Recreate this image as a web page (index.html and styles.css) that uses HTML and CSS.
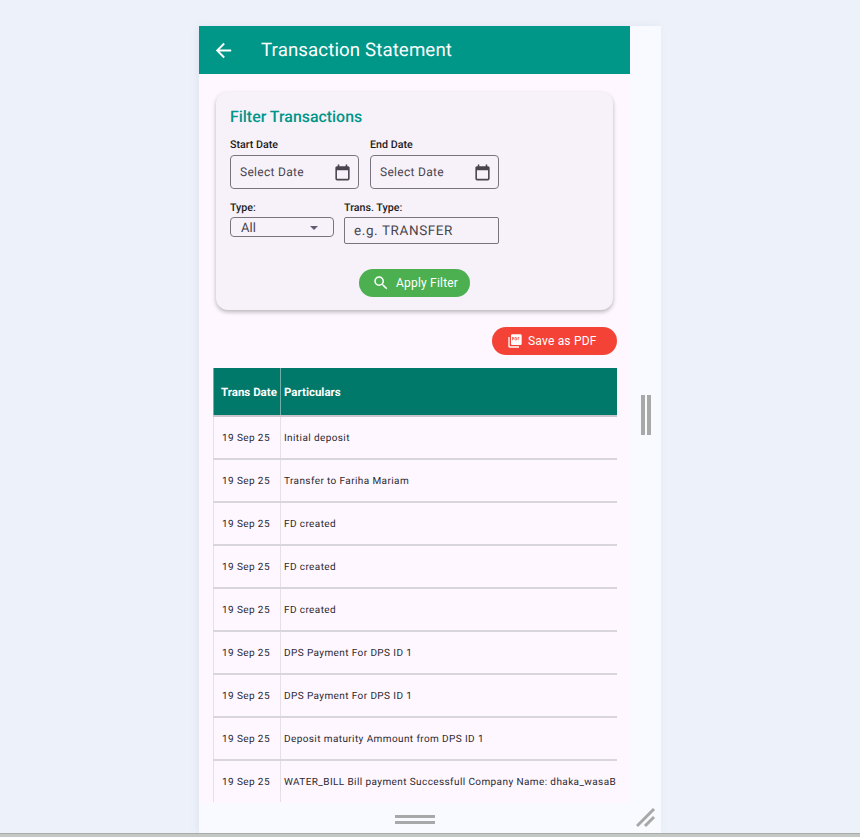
FILE: index.html
```html
<!DOCTYPE html>
<html lang="en">
<head>
    <meta charset="UTF-8">
    <meta name="viewport" content="width=device-width, initial-scale=1.0">
    <title>Transaction Statement</title>
    <link rel="stylesheet" href="styles.css">
</head>
<body>

    <div class="frame">
        <div class="app">
            <header class="app-bar">
                <svg class="back-icon" viewBox="0 0 24 24" width="23" height="23"><path d="M20 11H7.830l5.590-5.590L12 4l-8 8 8 8 1.410-1.410L7.830 13H20v-2z"/></svg>
                <h1>Transaction Statement</h1>
            </header>

            <div class="content">
                <!-- Filter card -->
                <section class="filter-card">
                    <h2>Filter Transactions</h2>
                    <div class="date-row">
                        <div class="field">
                            <label>Start Date</label>
                            <div class="date-input">
                                <span>Select Date</span>
                                <svg viewBox="0 0 24 24" width="19" height="19"><path d="M19 4h-1V2h-2v2H8V2H6v2H5c-1.100 0-2 .9-2 2v14c0 1.100.9 2 2 2h14c1.100 0 2-.9 2-2V6c0-1.100-.9-2-2-2zm0 16H5V9h14v11z"/></svg>
                            </div>
                        </div>
                        <div class="field">
                            <label>End Date</label>
                            <div class="date-input">
                                <span>Select Date</span>
                                <svg viewBox="0 0 24 24" width="19" height="19"><path d="M19 4h-1V2h-2v2H8V2H6v2H5c-1.100 0-2 .9-2 2v14c0 1.100.9 2 2 2h14c1.100 0 2-.9 2-2V6c0-1.100-.9-2-2-2zm0 16H5V9h14v11z"/></svg>
                            </div>
                        </div>
                    </div>
                    <div class="type-row">
                        <div class="field">
                            <label>Type:</label>
                            <div class="select-box">
                                <span>All</span>
                                <i class="caret"></i>
                            </div>
                        </div>
                        <div class="field">
                            <label>Trans. Type:</label>
                            <div class="text-box">e.g. TRANSFER</div>
                        </div>
                    </div>
                    <div class="apply-row">
                        <button class="apply-btn">
                            <svg viewBox="0 0 24 24" width="18" height="18"><path d="M15.500 14h-.79l-.28-.27A6.470 6.470 0 0 0 16 9.500 6.500 6.500 0 1 0 9.500 16c1.610 0 3.090-.59 4.230-1.570l.27.28v.79l5 4.990L20.490 19l-4.990-5zm-6 0C7.010 14 5 11.990 5 9.500S7.010 5 9.500 5 14 7.010 14 9.500 11.990 14 9.500 14z"/></svg>
                            Apply Filter
                        </button>
                    </div>
                </section>

                <div class="pdf-row">
                    <button class="pdf-btn">
                        <svg viewBox="0 0 24 24" width="16" height="16"><path d="M20 2H8c-1.100 0-2 .9-2 2v12c0 1.100.9 2 2 2h12c1.100 0 2-.9 2-2V4c0-1.100-.9-2-2-2zM9.500 9.500h-1V11H7.500V6.500h2c.55 0 1 .45 1 1v1c0 .55-.45 1-1 1zm5 .5c0 .55-.45 1-1 1h-2V6.500h2c.55 0 1 .45 1 1V10zm4-2.500h-1.500v1h1.500v1h-1.500V11H16V6.500h2.500v1zM8.500 7.500h1v1h-1v-1zm4 0h1V10h-1V7.500zM4 6H2v14c0 1.100.9 2 2 2h14v-2H4V6z"/></svg>
                        Save as PDF
                    </button>
                </div>

                <!-- Statement table -->
                <div class="table-wrap">
                    <table>
                        <thead>
                            <tr>
                                <th class="date-col">Trans Date</th>
                                <th>Particulars</th>
                            </tr>
                        </thead>
                        <tbody>
                            <tr><td class="date-col">19 Sep 25</td><td>Initial deposit</td></tr>
                            <tr><td class="date-col">19 Sep 25</td><td>Transfer to Fariha Mariam</td></tr>
                            <tr><td class="date-col">19 Sep 25</td><td>FD created</td></tr>
                            <tr><td class="date-col">19 Sep 25</td><td>FD created</td></tr>
                            <tr><td class="date-col">19 Sep 25</td><td>FD created</td></tr>
                            <tr><td class="date-col">19 Sep 25</td><td>DPS Payment For DPS ID 1</td></tr>
                            <tr><td class="date-col">19 Sep 25</td><td>DPS Payment For DPS ID 1</td></tr>
                            <tr><td class="date-col">19 Sep 25</td><td>Deposit maturity Ammount from DPS ID 1</td></tr>
                            <tr><td class="date-col">19 Sep 25</td><td>WATER_BILL Bill payment Successfull Company Name: dhaka_wasaB</td></tr>
                        </tbody>
                    </table>
                </div>
            </div>
        </div>

        <div class="side-handle"><i></i><i></i></div>

        <div class="bottom-handle"><i></i><i></i></div>
        <div class="corner">
            <svg viewBox="0 0 20 20" width="20" height="20"><path d="M1 18 L18 1 M9 18 L18 9" /></svg>
        </div>
    </div>

    <div class="page-edge"></div>

</body>
</html>
```

FILE: styles.css
```css
body {
    font-family: Roboto, "Liberation Sans", sans-serif;
    text-rendering: geometricPrecision;
    margin: 0;
    height: 837px;
    overflow: hidden;
    background-color: #edf2fa;
    display: flex;
    flex-direction: column;
    align-items: center;
    color: #1d1b20;
}

.frame {
    margin-top: 26px;
    width: 462px;
    height: 807px;
    display: grid;
    grid-template-columns: 431px 31px;
    grid-template-rows: 777px 30px;
    background-color: #f9faff;
    box-shadow: -2px 0 8px rgba(60, 80, 110, 0.08);
}

.app {
    background-color: #fef7ff;
    overflow: hidden;
}

.app-bar {
    height: 48px;
    background-color: #009688;
    color: #ffffff;
    display: flex;
    align-items: center;
    padding-left: 13px;
}

.back-icon {
    fill: #ffffff;
    margin-right: 26px;
}

.app-bar h1 {
    font-size: 18.7px;
    line-height: 48px;
    font-weight: 400;
    margin: 0;
    letter-spacing: 0.1px;
}

.content {
    padding: 18px 14px 0 14px;
}

.filter-card {
    margin: 0 3px;
    height: 218px;
    box-sizing: border-box;
    padding: 15px 14px 14px;
    background-color: #f7f2fa;
    border-radius: 12px;
    box-shadow: 0 2px 4px rgba(0, 0, 0, 0.28);
}

.filter-card h2 {
    margin: 0 0 12px 0;
    font-size: 15.9px;
    line-height: 20px;
    font-weight: 500;
    color: #009688;
}

.field label {
    display: block;
    font-size: 10.7px;
    line-height: 12px;
    font-weight: 500;
    margin-bottom: 4px;
}

.date-row {
    display: flex;
    gap: 11px;
}

.date-input {
    width: 129px;
    height: 34px;
    box-sizing: border-box;
    border: 1px solid #79747e;
    border-radius: 4px;
    display: flex;
    align-items: center;
    justify-content: space-between;
    padding: 0 6px 0 9px;
    font-size: 12px;
    letter-spacing: 0.3px;
    color: #49454f;
}

.date-input svg {
    fill: #49454f;
}

.type-row {
    display: flex;
    gap: 10px;
    margin-top: 13px;
}

.type-row label {
    margin-bottom: 3px;
}

.select-box {
    width: 104px;
    height: 20px;
    box-sizing: border-box;
    border: 1px solid #79747e;
    border-radius: 4px;
    display: flex;
    align-items: center;
    justify-content: space-between;
    padding: 2px 15px 0 10px;
    font-size: 13px;
    color: #49454f;
}

.caret {
    width: 0;
    height: 0;
    border-left: 4.5px solid transparent;
    border-right: 4.5px solid transparent;
    border-top: 4.5px solid #625b71;
}

.text-box {
    width: 155px;
    height: 27px;
    box-sizing: border-box;
    border: 1px solid #79747e;
    border-radius: 2px;
    padding: 0 9px;
    line-height: 27px;
    font-size: 13.5px;
    letter-spacing: 0.6px;
    color: #49454f;
}

.apply-row {
    display: flex;
    justify-content: center;
    margin-top: 25px;
}

button {
    border: none;
    color: #ffffff;
    font-family: inherit;
    font-size: 12px;
    letter-spacing: 0.2px;
    font-weight: 400;
    display: flex;
    align-items: center;
    height: 28px;
    border-radius: 14px;
    padding: 0;
}

button svg {
    fill: #ffffff;
}

.apply-btn {
    width: 111px;
    background-color: #4caf50;
    padding-left: 13px;
    gap: 6px;
}

.pdf-row {
    display: flex;
    justify-content: flex-end;
    margin-top: 17px;
    margin-right: -1px;
}

.pdf-btn {
    width: 125px;
    background-color: #f44336;
    padding-left: 15px;
    gap: 5px;
}

.table-wrap {
    margin-top: 13px;
    width: 404px;
    overflow: hidden;
}

table {
    border-collapse: collapse;
    table-layout: fixed;
    width: 404px;
    font-size: 10px;
    letter-spacing: 0.4px;
    color: #2b2930;
}

th, td {
    padding: 0 3px;
    text-align: left;
    white-space: nowrap;
    border-left: 1px solid #e4e0e6;
}

th {
    height: 47px;
    background-color: #00796b;
    color: #ffffff;
    font-size: 11.5px;
    font-weight: 700;
    letter-spacing: 0;
    border-left: 1px solid #70b0a8;
    border-bottom: 2px solid #cac6cc;
}

td {
    height: 40px;
    padding-top: 1px;
    border-bottom: 2px solid #d9d5dc;
}

/* last row runs into the bottom of the app, no line under it */
tbody tr:last-child td {
    border-bottom: none;
}

.date-col {
    width: 67px;
    box-sizing: border-box;
    padding-left: 8px;
    padding-right: 0;
}

th.date-col {
    padding-left: 7px;
}

.side-handle {
    display: flex;
    justify-content: center;
    align-items: center;
    gap: 2px;
}

.side-handle i {
    width: 4px;
    height: 40px;
    background-color: #a8a8a8;
}

.bottom-handle {
    display: flex;
    flex-direction: column;
    align-items: center;
    justify-content: center;
    gap: 3px;
    padding-top: 3px;
}

.bottom-handle i {
    width: 40px;
    height: 3px;
    background-color: #a8a8a8;
}

.corner {
    display: flex;
    align-items: center;
    justify-content: center;
}

.corner svg {
    stroke: #a8a8a8;
    stroke-width: 3;
    fill: none;
}

.page-edge {
    width: 100%;
    height: 4px;
    background-color: #c4c8c4;
    border-top: 1px solid #a9aca9;
    box-sizing: border-box;
}
```
